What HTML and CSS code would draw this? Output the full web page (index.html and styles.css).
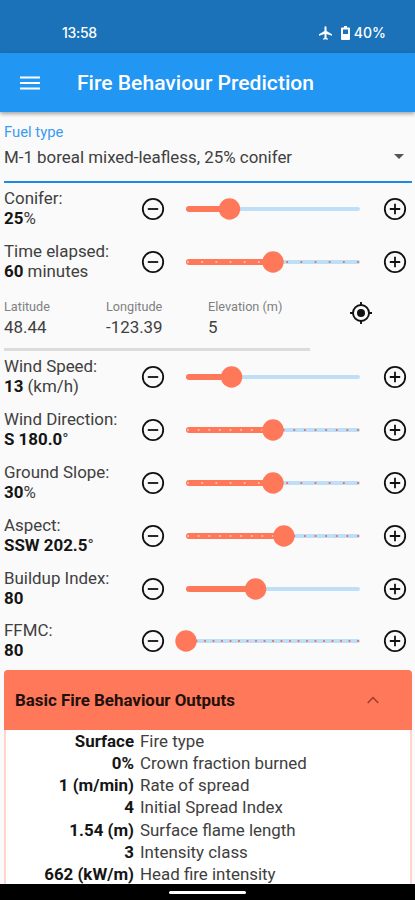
FILE: index.html
```html
<!DOCTYPE html>
<html lang="en">
<head>
    <meta charset="UTF-8" />
    <meta name="viewport" content="width=device-width, initial-scale=1.0" />
    <title>Fire Behaviour Prediction</title>
    <link rel="stylesheet" href="styles.css">
</head>
<body>
    <!-- ========= Status bar ========= -->
    <div class="status-bar">
        <span class="clock">13:58</span>
        <svg class="plane" width="13" height="14" viewBox="2 2 19 20"><path fill="#fff" d="M21 16v-2l-8-5V3.500a1.500 1.500 0 0 0-3 0V9l-8 5v2l8-2.500V19l-2 1.500V22l3.500-1 3.500 1v-1.500L13 19v-5.500z"/></svg>
        <svg class="battery" width="9" height="14" viewBox="0 0 9 14"><path fill="#fff" fill-rule="evenodd" d="M3 0h3v1.500h2q1 0 1 1V13q0 1-1 1H1q-1 0-1-1V2.500q0-1 1-1h2zM2 3.500v4.500h5V3.500z"/></svg>
        <span class="charge">40%</span>
    </div>

    <!-- ========= App bar ========= -->
    <header class="app-bar">
        <svg width="20" height="14" viewBox="0 0 20 14"><path stroke="#fff" stroke-width="2.200" d="M0 1.500h20M0 7h20M0 12.500h20"/></svg>
        <h1>Fire Behaviour Prediction</h1>
    </header>

    <main>
        <div class="fuel">
            <label>Fuel type</label>
            <div class="fuel-value">
                <span>M-1 boreal mixed-leafless, 25% conifer</span>
                <svg width="10" height="5" viewBox="0 0 10 5"><path fill="#555" d="M0 0h10L5 5z"/></svg>
            </div>
        </div>

        <div id="fuelSliders"></div>

        <!-- ========= Location ========= -->
        <div class="location">
            <div class="coords">
                <div><label>Latitude</label><span>48.44</span></div>
                <div><label>Longitude</label><span>-123.39</span></div>
                <div><label>Elevation (m)</label><span>5</span></div>
            </div>
            <svg width="24" height="24" viewBox="0 0 24 24" fill="none" stroke="#111" stroke-width="1.900">
                <circle cx="12" cy="12" r="8"/>
                <circle cx="12" cy="12" r="4" fill="#111" stroke="none"/>
                <path d="M12 1v3M12 20v3M1 12h3M20 12h3"/>
            </svg>
        </div>

        <div id="weatherSliders"></div>

        <!-- ========= Outputs ========= -->
        <section class="outputs">
            <div class="outputs-head">
                <h2>Basic Fire Behaviour Outputs</h2>
                <svg width="12" height="8" viewBox="0 0 12 8"><path fill="none" stroke="#993f2c" stroke-width="1.500" d="M.7 7L6 1.500 11.300 7"/></svg>
            </div>
            <dl>
                <dt>Surface</dt><dd>Fire type</dd>
                <dt>0%</dt><dd>Crown fraction burned</dd>
                <dt>1 (m/min)</dt><dd>Rate of spread</dd>
                <dt>4</dt><dd>Initial Spread Index</dd>
                <dt>1.54 (m)</dt><dd>Surface flame length</dd>
                <dt>3</dt><dd>Intensity class</dd>
                <dt>662 (kW/m)</dt><dd>Head fire intensity</dd>
            </dl>
        </section>
    </main>

    <div class="nav-bar"><div class="handle"></div></div>

    <script src="script.js"></script>
</body>
</html>
```
FILE: styles.css
```css
:root {
    --blue: #2196f3;
    --blue-dark: #1b72b8;
    --coral: #ff785a;
    --bg: #fafafa;
}

* {
    box-sizing: border-box;
}

body {
    display: flex;
    flex-direction: column;
    height: 900px;
    margin: 0;
    overflow: hidden;
    background: var(--bg);
    color: #404040;
    font-family: Roboto, sans-serif;
    font-size: 16.9px;
    line-height: 20px;
}

svg {
    display: block;
    flex: none;
    overflow: visible;
}

/* ====== Top bars ====== */
.status-bar {
    display: flex;
    flex: none;
    align-items: center;
    height: 53px;
    padding: 12px 29px 0 62px;
    background: var(--blue-dark);
    color: #fff;
    font-family: Inter, sans-serif;
    font-size: 14px;
    font-weight: 500;
}
.clock {
    letter-spacing: -0.3px;
}
.plane {
    margin-left: auto;
}
.battery {
    margin: 0 4px 0 9px;
}
.app-bar {
    display: flex;
    flex: none;
    align-items: center;
    gap: 37px;
    height: 59px;
    padding: 0 20px;
    background: var(--blue);
    box-shadow: 0 2px 4px rgba(0, 0, 0, 0.35);
    z-index: 1;
}
h1 {
    margin: 0;
    color: #fff;
    font-size: 21.1px;
    font-weight: 500;
    line-height: 26px;
}

main {
    flex: 1;
    min-height: 0;
    padding: 0 3px 0 4px;
    overflow: hidden;
}

/* ====== Fuel type ====== */
.fuel {
    height: 71px;
    padding-top: 10px;
    border-bottom: 2px solid #1e88e5;
}
.fuel label {
    display: block;
    color: #3d9bf0;
    font-size: 14.8px;
    line-height: 20px;
}
.fuel-value {
    display: flex;
    align-items: center;
    justify-content: space-between;
    height: 29px;
    padding-right: 8px;
}

/* ====== Slider rows ====== */
.row {
    display: flex;
    align-items: center;
    height: 52.8px;
}
.row-text {
    width: 137px;
    padding-bottom: 2px;
}
.row-text b,
dt {
    color: #151515;
    font-weight: 700;
}
.slider {
    margin: 0 23px 0 21px;
}

/* ====== Location ====== */
.location {
    display: flex;
    gap: 39px;
    height: 62.5px;
}
.coords {
    display: grid;
    grid-template-columns: 102px 102px 1fr;
    width: 306px;
    padding-top: 8px;
    border-bottom: 3px solid #dcdcdc;
}
.coords label {
    display: block;
    color: #808080;
    font-size: 12.7px;
    line-height: 20px;
}
.location svg {
    margin-top: 12px;
}

/* ====== Outputs ====== */
.outputs {
    margin-top: 2.5px;
    border: 1px solid #ffd3d0;
    border-width: 0 2px;
    border-radius: 4px 4px 0 0;
    background: #fff;
}
.outputs-head {
    display: flex;
    align-items: center;
    justify-content: space-between;
    height: 60px;
    margin: 0 -2px;
    padding: 0 33px 0 11px;
    border-radius: 4px 4px 0 0;
    background: var(--coral);
}
h2 {
    margin: 0;
    color: #21100c;
    font-size: 16.9px;
    font-weight: 700;
}
dl {
    display: grid;
    grid-template-columns: 128px 1fr;
    column-gap: 6px;
    margin: -0.5px 0 0;
    line-height: 22.2px;
}
dt {
    text-align: right;
}
dd {
    margin: 0;
}

/* ====== Navigation bar ====== */
.nav-bar {
    flex: none;
    height: 16px;
    padding-top: 7px;
    background: #000;
}
.handle {
    width: 77px;
    height: 3px;
    margin: 0 auto;
    border-radius: 2px;
    background: #fff;
}
```
FILE: script.js
```js
/* ========= Slider data ========= */
// pos: thumb position from 0 to 1, ticks: number of divisions (0 = continuous)
const fuelRows = [
    { name: 'Conifer:', value: '25', unit: '%', pos: 0.25, ticks: 0 },
    { name: 'Time elapsed:', value: '60', unit: ' minutes', pos: 0.5, ticks: 12 }
];
const weatherRows = [
    { name: 'Wind Speed:', value: '13', unit: ' (km/h)', pos: 0.262, ticks: 0 },
    { name: 'Wind Direction:', value: 'S 180.0', unit: '°', pos: 0.5, ticks: 16 },
    { name: 'Ground Slope:', value: '30', unit: '%', pos: 0.5, ticks: 12 },
    { name: 'Aspect:', value: 'SSW 202.5', unit: '°', pos: 0.5625, ticks: 16 },
    { name: 'Buildup Index:', value: '80', unit: '', pos: 0.4, ticks: 0 },
    { name: 'FFMC:', value: '80', unit: '', pos: 0, ticks: 20 }
];

const WIDTH = 174;

function icon(plus) {
    return `<svg width="24" height="24" viewBox="0 0 24 24" fill="none" stroke="#111" stroke-width="1.8">
        <circle cx="12" cy="12" r="10.2"/><path d="M6.8 12h10.4${plus ? 'M12 6.8v10.4' : ''}"/></svg>`;
}

function slider(row) {
    const x = row.pos * WIDTH;
    let dots = '';
    for (let i = 0; row.ticks && i <= row.ticks; i++) {
        const cx = 2 + i * (WIDTH - 4) / row.ticks;
        dots += `<circle cx="${cx}" cy="11" r="1.1" fill="${cx < x ? '#ffc4b0' : '#e86a58'}"/>`;
    }
    return `<svg class="slider" width="${WIDTH}" height="22">
        <rect y="9" width="${WIDTH}" height="4" rx="2" fill="#bfdff9"/>
        <rect y="8" width="${x}" height="6" rx="3" fill="#ff785a"/>
        ${dots}
        <circle cx="${x}" cy="11" r="10.7" fill="#ff785a"/></svg>`;
}

function drawRows(id, rows) {
    document.getElementById(id).innerHTML = rows.map(row => `
        <div class="row">
            <div class="row-text">${row.name}<br><b>${row.value}</b>${row.unit}</div>
            ${icon(false)}${slider(row)}${icon(true)}
        </div>`).join('');
}

drawRows('fuelSliders', fuelRows);
drawRows('weatherSliders', weatherRows);
```
